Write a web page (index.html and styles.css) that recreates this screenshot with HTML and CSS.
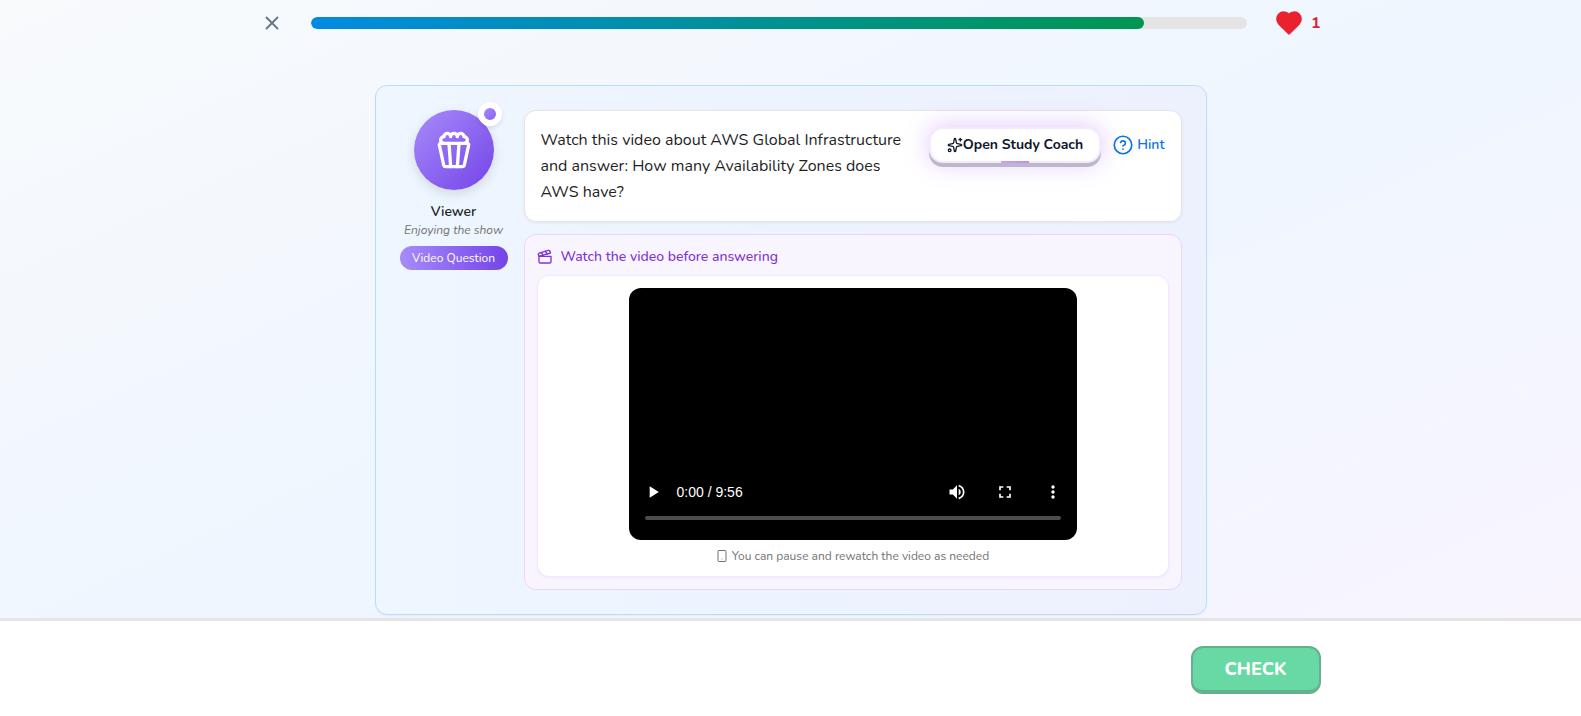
FILE: index.html
```html
<!DOCTYPE html>
<html lang="en">
<head>
    <meta charset="UTF-8">
    <meta name="viewport" content="width=device-width, initial-scale=1.0">
    <title>Video Question</title>
    <link rel="stylesheet" href="styles.css">
</head>
<body>
    <header class="topbar">
        <button class="close-btn" type="button" aria-label="Close">
            <svg class="icon" width="22" height="22" viewBox="0 0 24 24"><path d="M18 6 6 18"/><path d="m6 6 12 12"/></svg>
        </button>
        <div class="progress" role="progressbar" aria-label="Lesson progress" aria-valuenow="89" aria-valuemin="0" aria-valuemax="100">
            <div class="progress-fill" style="width: 89%"></div>
        </div>
        <div class="hearts">
            <svg class="icon heart" width="28" height="28" viewBox="0 0 24 24"><path d="M19 14c1.49-1.46 3-3.21 3-5.5A5.5 5.5 0 0 0 16.5 3c-1.76 0-3 .5-4.5 2-1.5-1.5-2.74-2-4.5-2A5.5 5.5 0 0 0 2 8.5c0 2.3 1.5 4.05 3 5.5l7 7Z"/></svg>
            <span>1</span>
        </div>
    </header>

    <main>
        <section class="lesson-card">
            <aside class="character">
                <div class="avatar">
                    <svg class="icon" width="40" height="40" viewBox="0 0 24 24"><path d="M18 8a2 2 0 0 0 0-4 2 2 0 0 0-4 0 2 2 0 0 0-4 0 2 2 0 0 0-4 0 2 2 0 0 0 0 4"/><path d="M10 22 9 8"/><path d="m14 22 1-14"/><path d="M20 8c.5 0 .9.4.8 1l-2.6 12c-.1.5-.7 1-1.2 1H7c-.6 0-1.1-.4-1.2-1L3.2 9c-.1-.6.3-1 .8-1Z"/></svg>
                    <span class="avatar-badge"></span>
                </div>
                <div class="character-name">Viewer</div>
                <div class="character-mood">Enjoying the show</div>
                <div class="question-type">Video Question</div>
            </aside>

            <div class="content">
                <div class="question">
                    <p>Watch this video about AWS Global Infrastructure and answer: How many Availability Zones does AWS have?</p>
                    <div class="actions">
                        <button class="coach-btn" type="button">
                            <svg class="icon" width="16" height="16" viewBox="0 0 24 24"><path d="M11.017 2.814a1 1 0 0 1 1.966 0l1.051 5.558a2 2 0 0 0 1.594 1.594l5.558 1.051a1 1 0 0 1 0 1.966l-5.558 1.051a2 2 0 0 0-1.594 1.594l-1.051 5.558a1 1 0 0 1-1.966 0l-1.051-5.558a2 2 0 0 0-1.594-1.594l-5.558-1.051a1 1 0 0 1 0-1.966l5.558-1.051a2 2 0 0 0 1.594-1.594z"/><path d="M20 2v4"/><path d="M22 4h-4"/><circle cx="4" cy="20" r="2"/></svg>
                            Open Study Coach
                        </button>
                        <button class="hint-btn" type="button">
                            <svg class="icon" width="20" height="20" viewBox="0 0 24 24"><circle cx="12" cy="12" r="10.5"/><path d="M9.09 9a3 3 0 0 1 5.83 1c0 2-3 3-3 3"/><path d="M12 17h.01"/></svg>
                            Hint
                        </button>
                    </div>
                </div>

                <div class="video-box">
                    <div class="video-title">
                        <svg class="icon" width="16" height="16" viewBox="0 0 24 24"><path d="M20.2 6 3 11l-.9-2.4c-.3-1.1.3-2.2 1.3-2.5l13.5-4c1.1-.3 2.2.3 2.5 1.3Z"/><path d="m6.2 5.3 3.1 3.9"/><path d="m12.4 3.4 3.1 4"/><path d="M3 11h18v8a2 2 0 0 1-2 2H5a2 2 0 0 1-2-2Z"/></svg>
                        Watch the video before answering
                    </div>
                    <div class="video-frame">
                        <div class="player">
                            <div class="controls">
                                <button type="button" aria-label="Play">
                                    <svg width="20" height="20" viewBox="0 0 24 24"><path d="M8 5v14l11-7z"/></svg>
                                </button>
                                <span class="time">0:00 / 9:56</span>
                                <button type="button" aria-label="Mute">
                                    <svg width="20" height="20" viewBox="0 0 24 24"><path d="M3 9v6h4l5 5V4L7 9H3zm13.5 3A4.5 4.5 0 0 0 14 7.97v8.05c1.48-.73 2.5-2.25 2.5-4.02zM14 3.23v2.06c2.89.86 5 3.54 5 6.71s-2.11 5.85-5 6.71v2.06c4.01-.91 7-4.49 7-8.77s-2.99-7.86-7-8.77z"/></svg>
                                </button>
                                <button type="button" aria-label="Full screen">
                                    <svg width="20" height="20" viewBox="0 0 24 24"><path d="M7 14H5v5h5v-2H7v-3zm-2-4h2V7h3V5H5v5zm12 7h-3v2h5v-5h-2v3zM14 5v2h3v3h2V5h-5z"/></svg>
                                </button>
                                <button type="button" aria-label="More options">
                                    <svg width="20" height="20" viewBox="0 0 24 24"><path d="M12 8c1.1 0 2-.9 2-2s-.9-2-2-2-2 .9-2 2 .9 2 2 2zm0 2c-1.1 0-2 .9-2 2s.9 2 2 2 2-.9 2-2-.9-2-2-2zm0 6c-1.1 0-2 .9-2 2s.9 2 2 2 2-.9 2-2-.9-2-2-2z"/></svg>
                                </button>
                            </div>
                            <input class="timeline" type="range" min="0" max="596" value="0" aria-label="Seek">
                        </div>
                        <div class="video-note">
                            <svg class="icon" width="12" height="12" viewBox="0 0 24 24"><rect x="4" y="1" width="16" height="22" rx="2"/><path d="M12 18h.01"/></svg>
                            You can pause and rewatch the video as needed
                        </div>
                    </div>
                </div>
            </div>
        </section>
    </main>

    <footer class="footer">
        <div class="footer-inner">
            <button class="check-btn" type="button">CHECK</button>
        </div>
    </footer>
</body>
</html>
```
FILE: styles.css
```css
* {
    box-sizing: border-box;
}

body {
    margin: 0;
    min-height: 100vh;
    display: flex;
    flex-direction: column;
    font-family: Nunito, 'Noto Sans', sans-serif;
    font-size: 14px;
    line-height: 20px;
    color: #1f1f1f;
    background: linear-gradient(to bottom right, #f8fafc 0%, #eff6ff 50%, #faf5ff 100%);
}

button {
    font: inherit;
    border: none;
    background: none;
    padding: 0;
    cursor: pointer;
}

svg {
    display: block;
    flex-shrink: 0;
}

.icon {
    fill: none;
    stroke: currentColor;
    stroke-width: 2;
    stroke-linecap: round;
    stroke-linejoin: round;
}

/* Top bar */
.topbar {
    width: 100%;
    max-width: 1140px;
    margin: 0 auto;
    padding: 9px 40px 0;
    display: flex;
    align-items: center;
    gap: 28px;
}

.close-btn {
    color: #64748b;
}

.progress {
    flex: 1;
    height: 12px;
    border-radius: 6px;
    background-color: #e5e5e5;
    overflow: hidden;
}

.progress-fill {
    height: 100%;
    border-radius: 6px;
    background: linear-gradient(135deg, #008be3, #009650);
}

.hearts {
    display: flex;
    align-items: center;
    gap: 8px;
    color: #e11d2e;
    font-size: 16px;
    font-weight: 700;
}

.heart {
    fill: #eb212e;
    stroke: #eb212e;
}

/* Lesson card */
main {
    flex: 1;
    padding: 48px 24px 3px;
}

.lesson-card {
    max-width: 832px;
    margin: 0 auto;
    padding: 24px;
    display: flex;
    gap: 16px;
    border: 1px solid #b8dcfc;
    border-radius: 12px;
    background: linear-gradient(90deg, #eef6ff, #edf1fe);
    box-shadow: 0 1px 2px rgba(0, 0, 0, 0.05);
}

.character {
    width: 108px;
    flex-shrink: 0;
    display: flex;
    flex-direction: column;
    align-items: center;
    white-space: nowrap;
}

.avatar {
    position: relative;
    width: 80px;
    height: 80px;
    margin-bottom: 12px;
    display: flex;
    align-items: center;
    justify-content: center;
    border-radius: 50%;
    color: #fff;
    background: linear-gradient(135deg, #a78bfa, #7444e8);
    box-shadow: 0 4px 12px rgba(0, 0, 0, 0.12);
}

.avatar-badge {
    position: absolute;
    top: -8px;
    right: -8px;
    width: 24px;
    height: 24px;
    border: 6px solid #fff;
    border-radius: 50%;
    background: linear-gradient(135deg, #a78bfa, #8b63ee);
    box-shadow: 0 2px 4px rgba(0, 0, 0, 0.1);
}

.character-name {
    font-weight: 600;
}

.character-mood {
    font-size: 12px;
    line-height: 16px;
    font-style: italic;
    color: #737373;
}

.question-type {
    width: 100%;
    margin-top: 8px;
    border-radius: 12px;
    font-size: 12px;
    line-height: 24px;
    text-align: center;
    color: #fff;
    background: linear-gradient(90deg, #a78bfa, #7444e8);
}

.content {
    flex: 1;
    min-width: 0;
    display: flex;
    flex-direction: column;
    gap: 12px;
}

.question {
    display: flex;
    align-items: flex-start;
    gap: 16px;
    padding: 16px;
    border: 1px solid #e5e5e5;
    border-radius: 12px;
    background-color: #fff;
    box-shadow: 0 1px 3px rgba(0, 0, 0, 0.06);
}

.question p {
    flex: 1;
    margin: 0;
    font-size: 16px;
    line-height: 26px;
}

.actions {
    display: flex;
    align-items: center;
    gap: 12px;
}

.coach-btn {
    display: flex;
    align-items: center;
    height: 36px;
    padding: 0 16px;
    border: 2px solid rgba(168, 85, 247, 0.12);
    border-radius: 14px;
    font-weight: 700;
    color: #0f172a;
    background:
        linear-gradient(90deg, #d0aafb, #c594fa) 50% 100% / 28px 2px no-repeat border-box,
        linear-gradient(#fff, #fff) padding-box;
    box-shadow: 0 4px 0 #beb7cb, 0 0 24px rgba(168, 85, 247, 0.35);
}

.hint-btn {
    display: flex;
    align-items: center;
    gap: 4px;
    font-weight: 600;
    color: #0b72e7;
}

/* Video */
.video-box {
    padding: 12px;
    border: 1px solid #e9d5ff;
    border-radius: 12px;
    background-color: #f9f5ff;
}

.video-title {
    display: flex;
    align-items: center;
    gap: 8px;
    margin-bottom: 8px;
    font-weight: 500;
    color: #8134cf;
}

.video-frame {
    padding: 12px;
    border: 1px solid #f3e8ff;
    border-radius: 12px;
    background-color: #fff;
    box-shadow: 0 1px 2px rgba(168, 85, 247, 0.1);
}

.player {
    max-width: 448px;
    aspect-ratio: 16 / 9;
    margin: 0 auto 8px;
    padding: 0 16px 20px;
    display: flex;
    flex-direction: column;
    justify-content: flex-end;
    gap: 14px;
    border-radius: 12px;
    background-color: #000;
    color: #fff;
}

.controls {
    display: flex;
    align-items: center;
    gap: 28px;
    margin: 0 -2px;
}

.controls button {
    color: inherit;
}

.controls svg {
    fill: currentColor;
}

.controls button:first-child {
    margin-right: -14px;
}

.time {
    flex: 1;
    font-family: 'Liberation Sans', Arial, sans-serif;
}

.timeline {
    appearance: none;
    width: 100%;
    height: 4px;
    margin: 0;
    border-radius: 2px;
    background-color: #4d4d4d;
}

.timeline::-webkit-slider-thumb {
    appearance: none;
    width: 0;
    height: 0;
}

.video-note {
    display: flex;
    align-items: center;
    justify-content: center;
    gap: 4px;
    font-size: 12px;
    line-height: 16px;
    color: #737373;
}

/* Footer */
.footer {
    border-top: 3px solid #e5e5e5;
    background-color: #fff;
}

.footer-inner {
    max-width: 1140px;
    margin: 0 auto;
    padding: 25px 40px 22px;
    display: flex;
    justify-content: flex-end;
}

.check-btn {
    height: 48px;
    padding: 0 32px;
    border: 2px solid #64b18b;
    border-bottom-width: 4px;
    border-radius: 12px;
    font-size: 18px;
    font-weight: 800;
    color: #fff;
    background-color: #68d8a4;
}
```
